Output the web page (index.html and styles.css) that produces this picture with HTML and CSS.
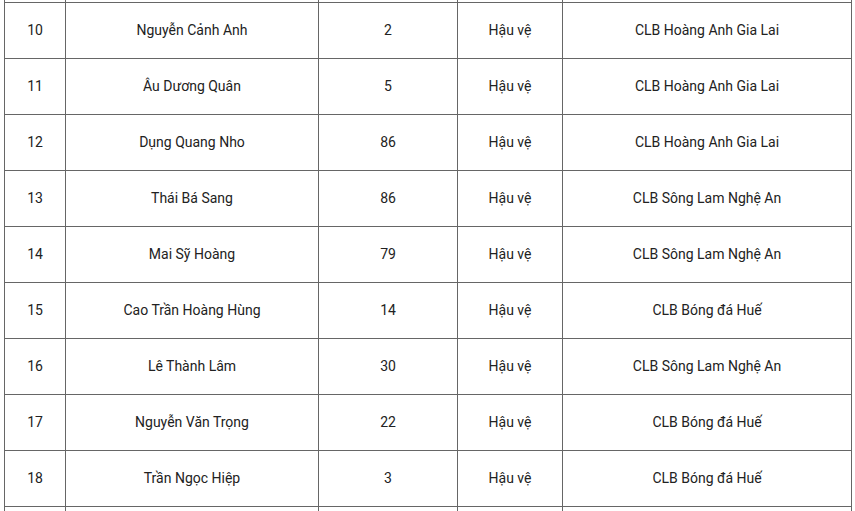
FILE: index.html
```html
<!DOCTYPE html>
<html lang="vi">
<head>
<meta charset="utf-8">
<link rel="stylesheet" href="styles.css">
</head>
<body>
<div class="wrap">
<table class="players">
<colgroup><col class="c1"><col class="c2"><col class="c3"><col class="c4"><col class="c5"></colgroup>
<tbody>
<tr class="hidden-row"><td></td><td></td><td></td><td></td><td></td></tr>
<tr><td>10</td><td>Nguyễn Cảnh Anh</td><td>2</td><td>Hậu vệ</td><td>CLB Hoàng Anh Gia Lai</td></tr>
<tr><td>11</td><td>Âu Dương Quân</td><td>5</td><td>Hậu vệ</td><td>CLB Hoàng Anh Gia Lai</td></tr>
<tr><td>12</td><td>Dụng Quang Nho</td><td>86</td><td>Hậu vệ</td><td>CLB Hoàng Anh Gia Lai</td></tr>
<tr><td>13</td><td>Thái Bá Sang</td><td>86</td><td>Hậu vệ</td><td>CLB Sông Lam Nghệ An</td></tr>
<tr><td>14</td><td>Mai Sỹ Hoàng</td><td>79</td><td>Hậu vệ</td><td>CLB Sông Lam Nghệ An</td></tr>
<tr><td>15</td><td>Cao Trần Hoàng Hùng</td><td>14</td><td>Hậu vệ</td><td>CLB Bóng đá Huế</td></tr>
<tr><td>16</td><td>Lê Thành Lâm</td><td>30</td><td>Hậu vệ</td><td>CLB Sông Lam Nghệ An</td></tr>
<tr><td>17</td><td>Nguyễn Văn Trọng</td><td>22</td><td>Hậu vệ</td><td>CLB Bóng đá Huế</td></tr>
<tr><td>18</td><td>Trần Ngọc Hiệp</td><td>3</td><td>Hậu vệ</td><td>CLB Bóng đá Huế</td></tr>
<tr><td></td><td></td><td></td><td></td><td></td></tr>
</tbody>
</table>
</div>
</body>
</html>
```
FILE: styles.css
```css
html, body {
  margin: 0;
  padding: 0;
  background: #fff;
}
.wrap {
  height: 511px;
  overflow: hidden;
  padding-left: 4px;
}
.players {
  border-collapse: collapse;
  table-layout: fixed;
  width: 847px;
  margin-top: -54px;
  font-family: Roboto, "Noto Sans", sans-serif;
  font-size: 14px;
  color: #222;
}
.c1 { width: 61px; }
.c2 { width: 253px; }
.c3 { width: 139px; }
.c4 { width: 105px; }
.c5 { width: 289px; }
.players td {
  border: 1px solid #666;
  height: 53px;
  padding: 0 0 2px 0;
  text-align: center;
  vertical-align: middle;
}
```
